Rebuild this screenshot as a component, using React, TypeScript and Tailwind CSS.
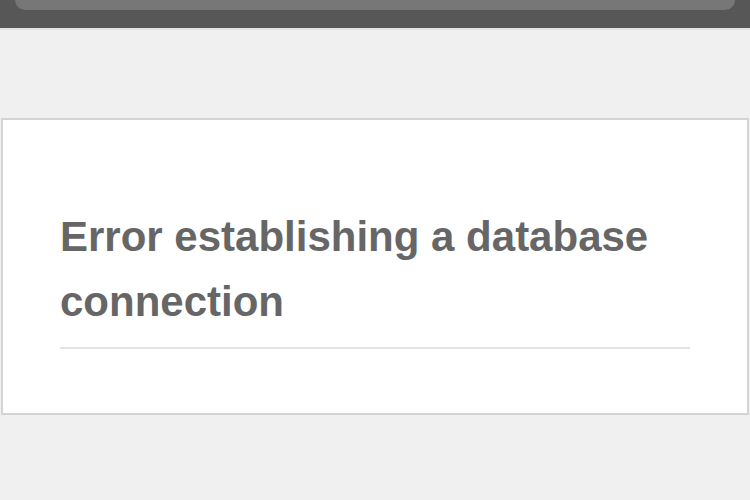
export default function App() {
  return (
    <div className="w-[750px] h-[500px] bg-[#f0f0f0] overflow-hidden" style={{ fontFamily: '"Liberation Sans", Arial, sans-serif' }}>
      <div className="h-[28px] bg-[#575757] px-[15px]">
        <div className="h-[10px] bg-[#777777] rounded-b-[11px]" />
      </div>
      <div className="h-[2px] bg-[#e4e4e4]" />
      <div className="pt-[88px] px-[1px]">
        <div className="border-2 border-[#d4d4d4] bg-white h-[297px] pt-[84px] px-[57px]">
          <h1 className="text-[42px] leading-[65px] font-bold text-[#666666]">
            Error establishing a database connection
          </h1>
          <div className="mt-[13px] h-[2px] bg-[#e2e2e2]" />
        </div>
      </div>
    </div>
  );
}
